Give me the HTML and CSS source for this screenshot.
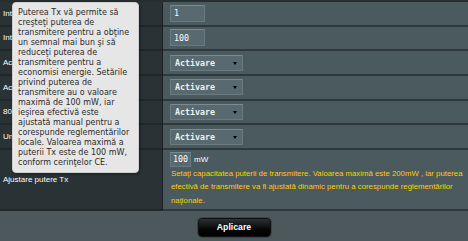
FILE: index.html
```html
<!DOCTYPE html>
<html lang="ro">
<head>
  <meta charset="UTF-8">
  <title>Wireless - Profesional</title>
  <link rel="stylesheet" href="styles.css">
</head>
<body>

  <div class="panel">
    <div class="rows">
      <div class="row">
        <div class="label">Interval DTIM</div>
        <div class="field"><input class="text w1" type="text" value="1"></div>
      </div>
      <div class="row">
        <div class="label">Interval de semnalizare</div>
        <div class="field"><input class="text w1" type="text" value="100"></div>
      </div>
      <div class="row">
        <div class="label">Activare TX Bursting</div>
        <div class="field"><div class="select"><span>Activare</span></div></div>
      </div>
      <div class="row">
        <div class="label">Activare WMM APSD</div>
        <div class="field"><div class="select"><span>Activare</span></div></div>
      </div>
      <div class="row">
        <div class="label">802.11ac Beamforming</div>
        <div class="field"><div class="select"><span>Activare</span></div></div>
      </div>
      <div class="row">
        <div class="label">Universal Beamforming</div>
        <div class="field"><div class="select"><span>Activare</span></div></div>
      </div>
      <div class="row tall">
        <div class="label">Ajustare putere Tx</div>
        <div class="field">
          <div class="power">
            <input class="text w2" type="text" value="100">
            <span class="unit">mW</span>
          </div>
          <p class="hint">Setaţi capacitatea puterii de transmitere. Valoarea maximă este 200mW , iar puterea efectivă de transmitere va fi ajustată dinamic pentru a corespunde reglementărilor naţionale.</p>
        </div>
      </div>
    </div>

    <div class="actions">
      <button class="apply">Aplicare</button>
    </div>

    <!-- tooltip peste etichete -->
    <div class="tip">Puterea Tx vă permite să creşteţi puterea de transmitere pentru a obţine un semnal mai bun şi să reduceţi puterea de transmitere pentru a economisi energie. Setările privind puterea de transmitere au o valoare maximă de 100 mW, iar ieşirea efectivă este ajustată manual pentru a corespunde reglementărilor locale. Valoarea maximă a puterii Tx este de 100 mW, conform cerinţelor CE.</div>
  </div>

</body>
</html>
```

FILE: styles.css
```css
/* ========== Baza ========== */
body {
  margin: 0;
  padding: 0;
  background: #4c585c;
  font-family: "Liberation Sans", Arial, sans-serif;
  color: #fff;
}
.panel {
  position: relative;
  width: 468px;
  height: 241px;
  overflow: hidden;
}

/* ========== Randuri ========== */
.rows {
  border-top: 2px solid #262e30;
}
.row {
  display: flex;
  height: 24.67px;
}
.row.tall {
  height: 61px;
}
.label {
  box-sizing: border-box;
  width: 163px;
  padding-left: 3px;
  background: #293234;
  border-right: 1px solid #1c2224;
  border-bottom: 2px solid #20282a;
  font-size: 8px;
  white-space: nowrap;
  overflow: hidden;
  display: flex;
  align-items: center;
}
.field {
  flex: 1;
  box-sizing: border-box;
  padding-left: 7px;
  background: #4b5a5f;
  border-bottom: 2px solid #2f383b;
  display: flex;
  align-items: center;
}
.tall .field {
  flex-direction: column;
  align-items: flex-start;
  justify-content: flex-start;
  padding-top: 2px;
}

/* ========== Controale ========== */
.text {
  box-sizing: border-box;
  margin: 0;
  padding: 0 0 0 3px;
  background: #586a6f;
  border: 1px solid #6a7b80;
  border-top-color: #7a8a8e;
  color: #fff;
  font-family: "DejaVu Sans Mono", monospace;
  font-size: 8.3px;
  outline: none;
}
.text.w1 {
  width: 35px;
  height: 17px;
}
.text.w2 {
  width: 21px;
  height: 15px;
  padding-left: 2px;
}
.select {
  position: relative;
  box-sizing: border-box;
  width: 73px;
  height: 16px;
  padding-left: 4px;
  background: #586a6f;
  border: 1px solid #6a7b80;
  border-top-color: #7a8a8e;
  font-family: "DejaVu Sans Mono", monospace;
  font-size: 8.3px;
  font-weight: bold;
  color: #eef2f3;
  display: flex;
  align-items: center;
}
.select::after {
  content: "";
  position: absolute;
  right: 5px;
  top: 6px;
  border-left: 2px solid transparent;
  border-right: 2px solid transparent;
  border-top: 3px solid #000;
}
.power {
  display: flex;
  align-items: center;
  gap: 3px;
}
.unit {
  font-size: 8px;
}
.hint {
  margin: 0;
  padding-left: 1px;
  color: #fc0;
  font-size: 7.8px;
  line-height: 13.33px;
}

/* ========== Butoane ========== */
.actions {
  display: flex;
  justify-content: center;
  padding-top: 7px;
}
.apply {
  width: 73px;
  height: 19px;
  padding: 0;
  background: linear-gradient(#2c3135, #050606 60%, #000);
  border: 1px solid #111;
  border-radius: 4px;
  box-shadow: 0 0 0 1px #3a4548;
  color: #fff;
  font-family: "Liberation Sans", Arial, sans-serif;
  font-size: 8.7px;
  font-weight: bold;
  cursor: pointer;
}

/* ========== Tooltip ========== */
.tip {
  position: absolute;
  left: 12px;
  top: 2px;
  width: 114px;
  padding: 5px 6px 4px 5px;
  background: #e6e6e6;
  border: 1px solid #cfcfcf;
  border-radius: 4px;
  box-shadow: 1px 1px 3px rgba(0,0,0,0.4);
  color: #2b2b2b;
  font-family: "DejaVu Sans", Verdana, sans-serif;
  font-size: 8px;
  line-height: 10px;
}
```
